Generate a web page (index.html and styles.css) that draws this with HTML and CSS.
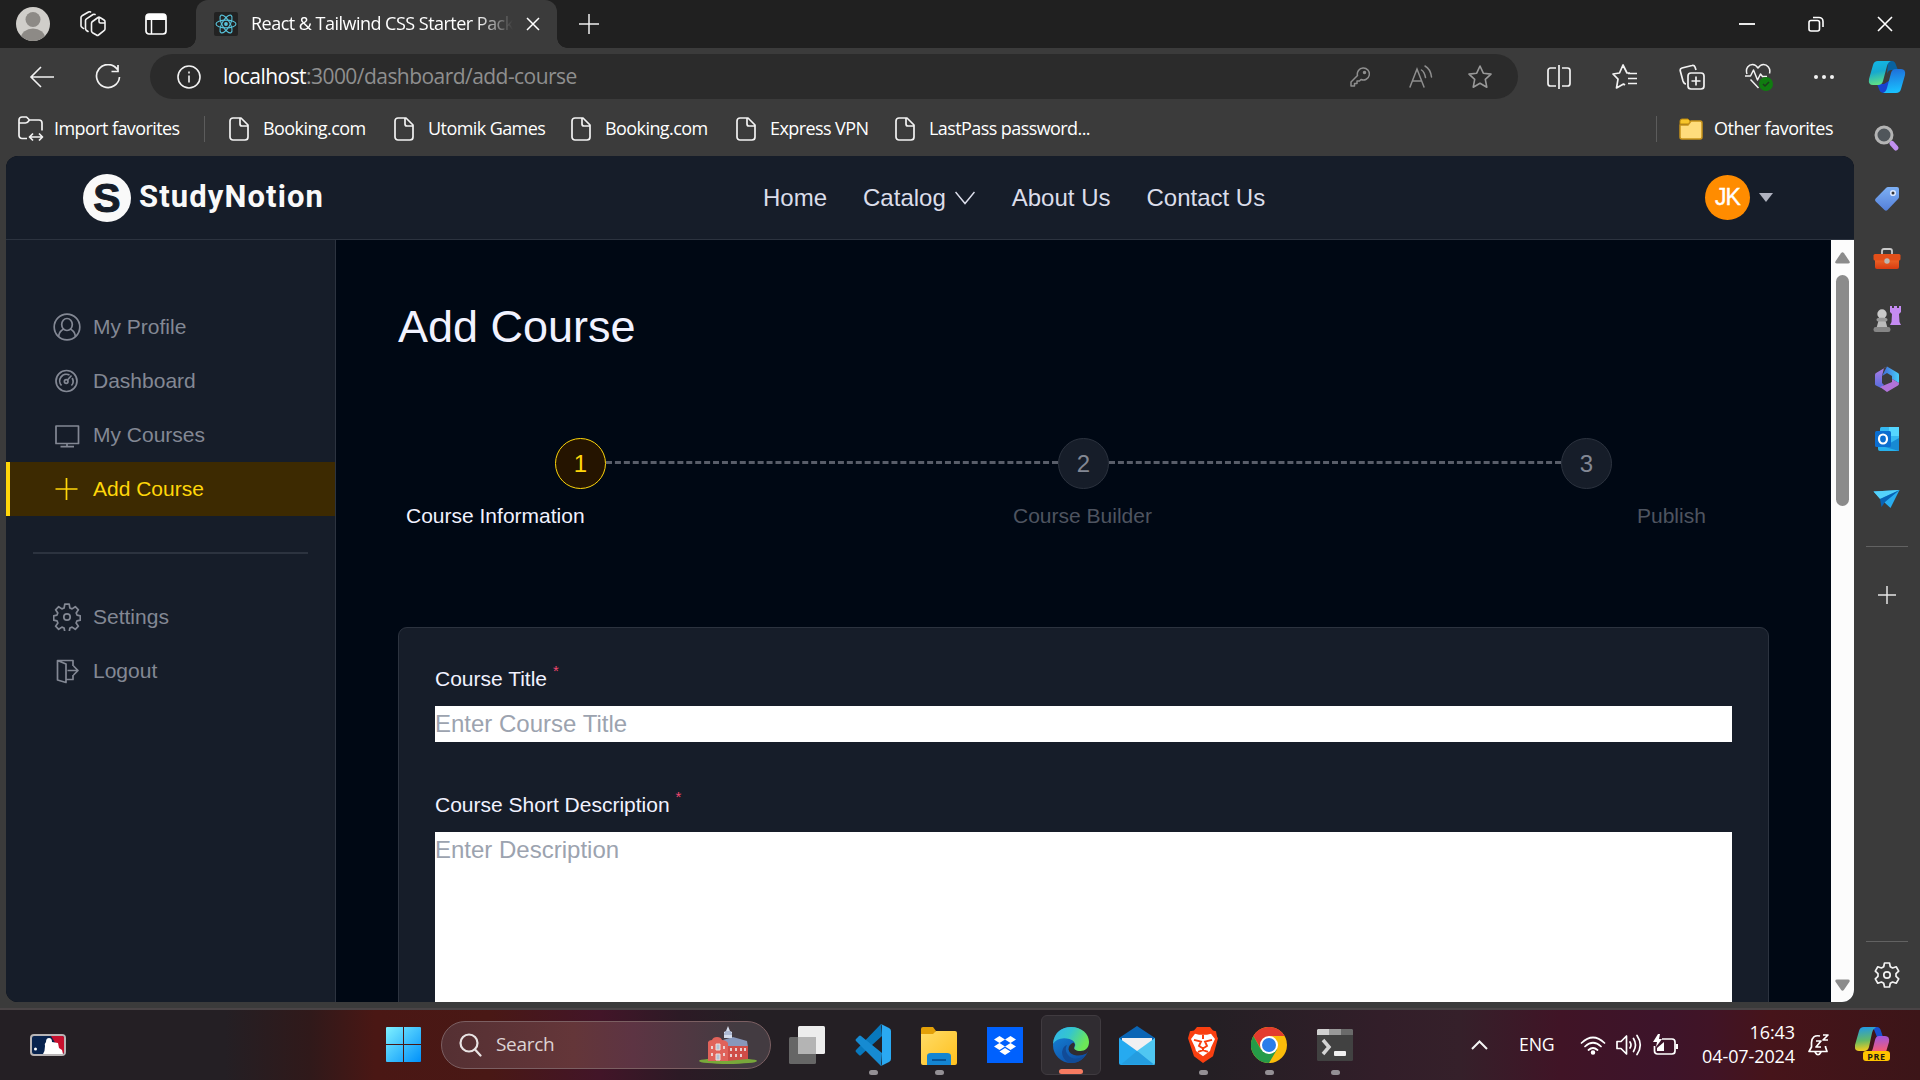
FILE: index.html
```html
<!DOCTYPE html>
<html lang="en">
<head>
<meta charset="utf-8">
<title>React &amp; Tailwind CSS Starter Pack</title>
<link rel="stylesheet" href="styles.css">
</head>
<body>
<div class="window">
  <div class="tabbar">
    <svg class="tb-avatar" width="34" height="34" viewBox="0 0 34 34"><defs><clipPath id="av"><circle cx="17" cy="17" r="17"/></clipPath></defs><g clip-path="url(#av)"><rect width="34" height="34" fill="#d0ceca"/><circle cx="17" cy="12.500" r="7.500" fill="#8d8a86"/><ellipse cx="17" cy="31" rx="12" ry="9.500" fill="#8d8a86"/></g></svg>
    <svg class="tb-work" width="26" height="26" viewBox="0 0 26 26" fill="none" stroke="#f2f2f2" stroke-width="1.600" stroke-linejoin="round" stroke-linecap="round"><path d="M12.500 10.500 18 6.500q1-.7 2 0l4 2.500q1 .7 1 1.800V18q0 1-1 1.700L18.500 24q-1 .7-2 0l-4-2.300q-1-.7-1-1.700v-7.800q0-1 1-1.700zM19 6.500v4q0 1.500 1.500 1.500H24"/><path d="M8 20.500l-1.500-1q-1-.6-1-1.700V9.500q0-1 1-1.700L13 3.500q1-.6 2 0M3.500 17.500 2 16.300q-1-.6-1-1.600V6.500q0-1 1-1.700L8.500 1q1-.6 2 0"/></svg>
    <svg class="tb-tabs" width="22" height="22" viewBox="0 0 22 22"><rect x="1" y="1" width="20" height="20" rx="3" fill="none" stroke="#fff" stroke-width="1.700"/><path d="M1 7V4a3 3 0 0 1 3-3h14a3 3 0 0 1 3 3v3z" fill="#fff"/><path d="M6.500 7v14" stroke="#fff" stroke-width="1.500"/></svg>
    <div class="tab">
      <svg width="24" height="24" viewBox="0 0 24 24"><rect width="24" height="24" rx="2" fill="#222"/><g fill="none" stroke="#58c4dc" stroke-width="1.100"><ellipse cx="12" cy="12" rx="10" ry="3.900"/><ellipse cx="12" cy="12" rx="10" ry="3.900" transform="rotate(60 12 12)"/><ellipse cx="12" cy="12" rx="10" ry="3.900" transform="rotate(120 12 12)"/></g><circle cx="12" cy="12" r="1.900" fill="#58c4dc"/></svg>
      <span class="tab-title">React &amp; Tailwind CSS Starter Pack</span>
      <svg class="tab-close" width="14" height="14" viewBox="0 0 14 14" stroke="#fff" stroke-width="1.500"><path d="M1 1l12 12M13 1 1 13"/></svg>
    </div>
    <svg class="tb-new" width="22" height="22" viewBox="0 0 22 22" stroke="#eee" stroke-width="1.500"><path d="M11 1v20M1 11h20"/></svg>
    <div class="win-controls">
      <svg width="16" height="16" viewBox="0 0 16 16" stroke="#fff" stroke-width="1.800"><path d="M0 8h16"/></svg>
      <svg width="16" height="16" viewBox="0 0 16 16" fill="none" stroke="#fff" stroke-width="1.600"><rect x="1" y="4.500" width="10.500" height="10.500" rx="2"/><path d="M5 1.500h6a4 4 0 0 1 4 4v5.500"/></svg>
      <svg width="16" height="16" viewBox="0 0 16 16" stroke="#fff" stroke-width="1.600"><path d="M1 1l14 14M15 1 1 15"/></svg>
    </div>
  </div>

  <div class="toolbar">
    <svg class="back" width="26" height="22" viewBox="0 0 26 22" fill="none" stroke="#f2f2f2" stroke-width="1.600"><path d="M25 11H2M12 1 2 11l10 10"/></svg>
    <svg class="reload" width="26" height="26" viewBox="0 0 26 26" fill="none" stroke="#f2f2f2" stroke-width="1.700"><path d="M22.500 5.500A11.500 11.500 0 1 0 24.500 13M23 1v6.500h-6.500"/></svg>
    <div class="address">
      <svg width="24" height="24" viewBox="0 0 24 24" fill="none" stroke="#f2f2f2" stroke-width="1.600"><circle cx="12" cy="12" r="11"/><path d="M12 10.500v7M12 6.500v2"/></svg>
      <span class="url"><b>localhost</b>:3000/dashboard/add-course</span>
      <svg class="key" width="20" height="20" viewBox="0 0 20 20" fill="none" stroke="#8f8f8f" stroke-width="1.500" stroke-linejoin="round"><path d="M13 1a6 6 0 1 1-2 11.500L9.500 14H7v2.500H4.500V19H1v-4l6.500-6.500A6 6 0 0 1 13 1z"/><circle cx="14.500" cy="5.500" r="1" fill="#8f8f8f"/></svg>
      <svg class="read" width="24" height="24" viewBox="0 0 24 24" fill="none" stroke="#8f8f8f" stroke-width="1.500" stroke-linecap="round"><path d="M1 22 8 4l7 18M3.500 16h9M12.500 5q3 2 4 7.500M16 1q5.500 3 6.500 11"/></svg>
      <svg class="star" width="26" height="26" viewBox="0 0 26 26" fill="none" stroke="#999" stroke-width="1.600" stroke-linejoin="round"><path d="M13 2l3.300 7.200 7.700.9-5.700 5.300 1.500 7.800L13 19.300l-6.800 3.900 1.500-7.800L2 10.100l7.700-.9z"/></svg>
    </div>
    <div class="tools">
      <svg width="26" height="26" viewBox="0 0 26 26" fill="none" stroke="#f2f2f2" stroke-width="1.700"><path d="M13 1v24M10 4H4.500A2.500 2.500 0 0 0 2 6.500v13A2.500 2.500 0 0 0 4.500 22H10M16 4h5.500A2.500 2.500 0 0 1 24 6.500v13a2.500 2.500 0 0 1-2.500 2.500H16"/></svg>
      <svg width="26" height="26" viewBox="0 0 26 26" fill="none" stroke="#f2f2f2" stroke-width="1.700" stroke-linejoin="round"><path d="M18 9h-3L11 1 7.500 9 1 10l5 5.200L4.500 24l7-4 1.500 1M16 9.500h9M16 14.500h9M16 19.500h9"/></svg>
      <svg width="26" height="26" viewBox="0 0 26 26" fill="none" stroke="#f2f2f2" stroke-width="1.700"><rect x="9" y="9" width="16" height="16" rx="3"/><path d="M17 12.500v9M12.500 17h9M17 6l-1-3a2.500 2.500 0 0 0-3-1.500L3 4a2.500 2.500 0 0 0-1.700 3L4 17q1 3 3 3"/></svg>
      <svg width="28" height="28" viewBox="0 0 28 28" fill="none" stroke="#f2f2f2" stroke-width="1.500" stroke-linejoin="round"><path d="M2 11C0 5 4 1.500 7.500 1.500c3 0 4.500 2 5.500 3.500 1-1.500 2.500-3.500 5.500-3.500C22 1.500 26 5 24.500 10.500M0 13h5.500l3-6 4 10 3-6 2 2.500H22M5.500 16.500l8 8.500"/><circle cx="21" cy="21" r="7" fill="#107c10" stroke="none"/><path d="m18 21 2 2 4-4" stroke="#1d3a1d"/></svg>
      <svg width="22" height="6" viewBox="0 0 22 6" fill="#f2f2f2"><circle cx="3" cy="3" r="2"/><circle cx="11" cy="3" r="2"/><circle cx="19" cy="3" r="2"/></svg>
    </div>
    <svg class="copilot" width="38" height="34" viewBox="0 0 38 34"><defs><linearGradient id="c1" x2=".2" y2="1"><stop stop-color="#11b8e8"/><stop offset=".5" stop-color="#17a9cf"/><stop offset="1" stop-color="#5ddf87"/></linearGradient><linearGradient id="c2" x2=".1" y2="1"><stop stop-color="#1f6bd8"/><stop offset="1" stop-color="#19c0ff"/></linearGradient></defs><path d="M20 1h4q3 0 4 4l2 5h-6q-4 0-5 4z" fill="#08629f"/><path d="M9 24h7l8-5-5 14h-3q-4 0-5-4z" fill="#1642cf"/><path d="M10 1h13q-3 1-4 5l-4 15q-1 4-5 4H5q-5 0-4-6L5 5q1-4 5-4z" fill="url(#c1)"/><path d="M28 33H15q3-1 4-5l4-15q1-4 5-4h5q5 0 4 6l-4 14q-1 4-5 4z" fill="url(#c2)"/></svg>
  </div>

  <div class="favorites">
    <svg class="import-ic" width="26" height="26" viewBox="0 0 26 26" fill="none" stroke="#f2f2f2" stroke-width="1.700" stroke-linejoin="round"><path d="M9 22.500H4a3 3 0 0 1-3-3V4a3 3 0 0 1 3-3h4.500l3 3H21a3 3 0 0 1 3 3v7.500M1 7h6.500q2 0 4-3M12 21h12M15 17.500 11.500 21l3.500 3.500M21 17.500l3.500 3.500-3.500 3.500"/></svg>
    <span class="fav-text f0">Import favorites</span>
    <i class="fav-sep"></i>
    <svg class="doc" viewBox="0 0 20 24"><path d="M1 4a3 3 0 0 1 3-3h8l7 7v12a3 3 0 0 1-3 3H4a3 3 0 0 1-3-3zM11 1v6q0 2 2 2h6"/></svg><span class="fav-text f1">Booking.com</span>
    <svg class="doc" viewBox="0 0 20 24"><path d="M1 4a3 3 0 0 1 3-3h8l7 7v12a3 3 0 0 1-3 3H4a3 3 0 0 1-3-3zM11 1v6q0 2 2 2h6"/></svg><span class="fav-text f2">Utomik Games</span>
    <svg class="doc" viewBox="0 0 20 24"><path d="M1 4a3 3 0 0 1 3-3h8l7 7v12a3 3 0 0 1-3 3H4a3 3 0 0 1-3-3zM11 1v6q0 2 2 2h6"/></svg><span class="fav-text f3">Booking.com</span>
    <svg class="doc" viewBox="0 0 20 24"><path d="M1 4a3 3 0 0 1 3-3h8l7 7v12a3 3 0 0 1-3 3H4a3 3 0 0 1-3-3zM11 1v6q0 2 2 2h6"/></svg><span class="fav-text f4">Express VPN</span>
    <svg class="doc" viewBox="0 0 20 24"><path d="M1 4a3 3 0 0 1 3-3h8l7 7v12a3 3 0 0 1-3 3H4a3 3 0 0 1-3-3zM11 1v6q0 2 2 2h6"/></svg><span class="fav-text f5">LastPass password...</span>
    <div class="fav-other"><i class="fav-sep other"></i>
    <svg width="24" height="22" viewBox="0 0 24 22"><path d="M1 3a2 2 0 0 1 2-2h6l2 2v3H1z" fill="#f7c52b" stroke="#b9860b"/><path d="M1 7h8l3-4h9a2 2 0 0 1 2 2v14a2 2 0 0 1-2 2H3a2 2 0 0 1-2-2z" fill="#ffdc7c" stroke="#c8931a" stroke-width="1.500"/></svg>
    <span class="fav-text fo">Other favorites</span></div>
  </div>

  <div class="main">
    <div class="viewport">
      <header class="nav">
        <div class="logo">
          <div class="logo-mark">S</div>
          <span>StudyNotion</span>
        </div>
        <nav class="links">
          <span>Home</span>
          <span class="catalog">Catalog <svg width="20" height="14" viewBox="0 0 20 14" fill="none" stroke="#dbddea" stroke-width="1.500"><path d="M.5 1 10 12.500 19.500 1"/></svg></span>
          <span>About Us</span>
          <span>Contact Us</span>
        </nav>
        <div class="user"><div class="avatar">JK</div><i class="caret"></i></div>
      </header>
      <div class="body">
        <aside class="side">
          <div class="row"><svg width="28" height="28" viewBox="0 0 28 28"><circle cx="14" cy="14" r="12.800"/><ellipse cx="14" cy="11.500" rx="5.300" ry="6"/><path d="M5.500 23.500q1-6 5.500-7.500M22.500 23.500q-1-6-5.500-7.500"/></svg>My Profile</div>
          <div class="row"><svg width="28" height="28" viewBox="0 0 28 28"><circle cx="13.500" cy="14" r="10.500"/><path d="M8.500 18.500a6.700 6.700 0 0 1 8-10.500M19.200 11q2.300 4.500-.8 7.500"/><circle cx="13.200" cy="14.500" r="1.800"/><path d="M14.500 13l4-4.500"/></svg>Dashboard</div>
          <div class="row"><svg width="28" height="28" viewBox="0 0 28 28"><rect x="3" y="5" width="22.500" height="17.500"/><path d="M14 22.500v3M7.500 25.700h13.500"/></svg>My Courses</div>
          <div class="row active"><svg width="28" height="28" viewBox="0 0 28 28"><path d="M13.500 3v22M2.500 14h22"/></svg>Add Course</div>
          <div class="rule"></div>
          <div class="row"><svg width="28" height="28" viewBox="0 0 28 28"><path d="M11.800 1.200h4.400l.7 3.800 2.200.9 3.200-2.200 3.100 3.100-2.200 3.200.9 2.200 3.200.6v4.300l-3.300.7-.9 2.200 2.300 3.200-3.100 3.100-3.200-2.200-2.200.9-.7 3.800h-4.400l-.7-3.800-2.200-.9-3.200 2.200-3.100-3.100 2.300-3.200-.9-2.200-3.300-.7v-4.300l3.200-.6.900-2.200-2.200-3.200 3.100-3.100 3.200 2.200 2.200-.9z"/><circle cx="14" cy="14" r="3.200"/></svg>Settings</div>
          <div class="row"><svg width="28" height="28" viewBox="0 0 28 28"><path d="M4.500 3.500 13 7v18.500L4.500 23zM4.500 3.500H20V9M13 22.500h7V18M14.500 13.500h10.500M20.500 9l4.500 4.500-4.500 4.500"/></svg>Logout</div>
        </aside>
        <main class="content">
          <h1>Add Course</h1>
          <div class="steps">
            <div class="dot on">1</div><div class="dash"></div><div class="dot">2</div><div class="dash"></div><div class="dot">3</div>
          </div>
          <div class="step-names"><span class="now">Course Information</span><span>Course Builder</span><span class="last">Publish</span></div>
          <form class="card">
            <label>Course Title <sup>*</sup></label>
            <div class="field">Enter Course Title</div>
            <label class="second">Course Short Description <sup>*</sup></label>
            <div class="field area">Enter Description</div>
          </form>
        </main>
        <div class="scroll">
          <svg width="15" height="12" viewBox="0 0 15 12" fill="#8b8b8b"><path d="M6 1.200q1.500-2 3 0l5.500 8q.8 2.300-1.500 2.300H2Q-.3 11.500.5 9.200z"/></svg>
          <div class="thumb"></div>
          <svg class="down" width="15" height="12" viewBox="0 0 15 12" fill="#8b8b8b"><path d="M6 10.800q1.500 2 3 0l5.500-8Q15.300.5 13 .5H2Q-.3.500.5 2.800z"/></svg>
        </div>
      </div>
    </div>
    <div class="rail">
      <svg class="find" viewBox="0 0 28 28"><circle cx="11" cy="11" r="8" fill="#50565b" stroke="#b4b4b4" stroke-width="3"/><path d="m19 19.500 4 4.500" stroke="#c190f0" stroke-width="5" stroke-linecap="round"/></svg>
      <svg viewBox="0 0 28 28"><defs><linearGradient id="tg" y2="1" x2="0"><stop stop-color="#7db0f5"/><stop offset="1" stop-color="#547fd8"/></linearGradient></defs><path d="M15 2h9q2 0 2 2v8q0 1-1 2L14.500 25q-1.500 1.500-3 0L2.700 16.500q-1.500-1.500 0-3L13 3q1-1 2-1z" fill="url(#tg)"/><circle cx="20" cy="8" r="2.300" fill="#333" stroke="#dce8ff" stroke-width="1.600"/></svg>
      <svg viewBox="0 0 28 28"><defs><linearGradient id="bx" y2="1" x2="0"><stop stop-color="#f2712f"/><stop offset="1" stop-color="#d83b10"/></linearGradient></defs><path d="M9 9V6q0-2 2-2h6q2 0 2 2v3" fill="none" stroke="#c9c9c9" stroke-width="1.800"/><path d="M2 12h24v10q0 2-2 2H4q-2 0-2-2z" fill="url(#bx)"/><rect x=".5" y="9" width="27" height="6.500" rx="1.500" fill="#e34f19"/><circle cx="14" cy="16" r="2.700" fill="#bcb7b3"/></svg>
      <svg viewBox="0 0 28 28"><path d="M17 1h2v2h2V1h3v2h2V1h2v6l-2 2 .5 8 1.500 3H17l1.500-3L19 9l-2-2z" fill="#c58bf2"/><circle cx="9" cy="9" r="4.700" fill="#c9c9c9"/><path d="M6.500 12h5l3 11h-11z" fill="#bbb"/><rect x="3.500" y="13" width="11" height="3.500" rx="1.700" fill="#999"/><rect x=".5" y="22" width="17" height="5" rx="2.300" fill="#858585"/></svg>
      <svg viewBox="0 0 28 28"><defs><linearGradient id="m1" x2="1"><stop stop-color="#3f68d8"/><stop offset="1" stop-color="#48cdf8"/></linearGradient><linearGradient id="m2" y2="1" x2="0"><stop stop-color="#b37de6"/><stop offset="1" stop-color="#556ddc"/></linearGradient></defs><path d="M14 1.500 25 8q1 .6 1 2v8l-7-4v-3l-5-3-5 3z" fill="url(#m1)"/><path d="M14 1.500 3 8Q2 8.600 2 10v9q0 1 1 1.500l5 2.500 3-3-2-2V11l2-8z" fill="url(#m2)"/><path d="m7 22 12-5v-3l7 4q0 2-1 2.500L14 27z" fill="#b173d8"/></svg>
      <svg viewBox="0 0 28 28"><rect x="7" y="2" width="19" height="18" rx="1.500" fill="#35b8f1"/><path d="M16 2h10v9H16z" fill="#55d6ff"/><path d="m26 13-14 8v5h14z" fill="#178ad4"/><path d="m5 20 21 6H7q-2 0-2-2z" fill="#27b1ed"/><rect x="2" y="6" width="16" height="16" rx="1.500" fill="#0b6ed0"/><ellipse cx="10" cy="14" rx="4" ry="4.500" fill="none" stroke="#fff" stroke-width="2.200"/></svg>
      <svg viewBox="0 0 28 28"><path d="M.5 6.500 26.500 5l-9 18-6-5.500z" fill="#29adf0"/><path d="M.5 6.500 26.500 5 7 14z" fill="#54d2fb"/><path d="M7 14 26.500 5 12 17l-3.500 5z" fill="#0863b5"/></svg>
      <i class="rail-line"></i>
      <svg class="plus" viewBox="0 0 18 18" stroke="#e5e5e5" stroke-width="1.500"><path d="M9 0v18M0 9h18"/></svg>
      <i class="rail-line low"></i>
      <svg class="gear" viewBox="0 0 26 26" fill="none" stroke="#f2f2f2" stroke-width="1.700" stroke-linejoin="round"><path d="M10.500 1h5l.8 3.700 2.300 1.300 3.600-1.200 2.500 4.300L22 11.700v2.600l2.700 2.600-2.500 4.300-3.600-1.200-2.300 1.300-.8 3.700h-5l-.8-3.700L7.400 20l-3.600 1.200-2.500-4.300L4 14.300v-2.600L1.300 9.100l2.500-4.300L7.400 6l2.300-1.300z"/><circle cx="13" cy="13" r="3.200"/></svg>
    </div>
  </div>
</div>

<div class="taskbar">
  <svg class="mlb" width="36" height="22" viewBox="0 0 36 22"><rect x="1" y="1" width="34" height="20" rx="3" fill="#08234e" stroke="#b8b4b5" stroke-width="2"/><path d="M21 2h11q2 0 2 2v14q0 2-2 2z" fill="#c8102e"/><path d="M13 20q2-3 2-8-1-2 1-4 0-4 3-4 3 0 3 4l6 1 1 5 3 2 1 4z" fill="#fff"/><circle cx="5.500" cy="15" r="1.500" fill="#fff"/></svg>
  <svg class="start" width="35" height="35" viewBox="0 0 35 35"><defs><linearGradient id="w" x2="1" y2="1"><stop stop-color="#7ff1ff"/><stop offset="1" stop-color="#0090fa"/></linearGradient></defs><path d="M1 0h16v17H0V1q0-1 1-1zM18 0h16q1 0 1 1v16H18zM0 18h17v17H1q-1 0-1-1zM18 18h17v16q0 1-1 1H18z" fill="url(#w)"/></svg>
  <div class="search">
    <svg width="23" height="24" viewBox="0 0 23 24" fill="none" stroke="#e9e4e4" stroke-width="2.200" stroke-linecap="round"><circle cx="10" cy="10" r="8.500"/><path d="m16 16.500 5.500 6"/></svg>
    <span>Search</span>
    <svg class="hall" width="60" height="38" viewBox="0 0 60 38"><ellipse cx="30" cy="35" rx="29" ry="3" fill="#78a83a"/><path d="m25 14 10-3 14 4 1 6H28z" fill="#8797bb"/><path d="M29 20h21v13l-21 2z" fill="#cf4d47"/><path d="M10 16q1-2 4-2 1-3 5-3t5 3q4 0 6 3v18H10z" fill="#e0625a"/><path d="M26 12V6l2-1 2-5 2 5 2 1v6z" fill="#d5dcec"/><path d="M26 8h8M27 6h6" stroke="#8797bb"/><path d="M14 20v3m0 4v3M26 20v3m0 4v3m7-8v3m5-3v3m5-3v3m4-3v3M33 28v3m5-3v3m5-3v3" stroke="#ebe4e6" stroke-width="1.700"/><path d="M18 34v-6h4v6zM18 18h4v6h-4z" fill="#b4c3d6" stroke="#f2dcd7"/></svg>
  </div>
  <div class="apps">
    <div class="app"><svg width="36" height="40" viewBox="0 0 36 40"><rect y="12" width="27" height="27" rx="1.500" fill="#666"/><rect x="9" y="1" width="27" height="28" rx="1.500" fill="#ededed"/><path d="M9 12h18v17H9z" fill="#b4b4b4"/></svg></div>
    <div class="app run"><svg width="36" height="42" viewBox="0 0 36 42"><path d="m26 0 1 12L6 31q-1 1-2 0l-3-3q-1-1 0-2z" fill="#0878bd"/><path d="m1 15 3-3q1-1 2 0l21 17-1 13L1 17q-1-1 0-2z" fill="#168bd2"/><path d="m26 0 8 4q2 1 2 3v28q0 2-2 3l-8 4q1-1 1-3V3q0-2-1-3z" fill="#2aa9f2"/></svg></div>
    <div class="app run"><svg width="36" height="40" viewBox="0 0 36 40"><defs><linearGradient id="fo" x2="1" y2="1"><stop stop-color="#ffdc67"/><stop offset="1" stop-color="#ffc01e"/></linearGradient></defs><path d="M0 4q0-2 2-2h10l3 4-3 5H0z" fill="#e3a008"/><path d="M0 9h12l3-3h19q2 0 2 2v30q0 2-2 2H2q-2 0-2-2z" fill="url(#fo)"/><path d="M6 40v-9q0-3 4-3h16q4 0 4 3v9z" fill="#1485d2"/><path d="M11 35h14" stroke="#075598" stroke-width="2"/></svg></div>
    <div class="app"><svg width="36" height="36" viewBox="0 0 36 36"><path d="M0 0h36v36H0z" fill="#0061fe"/><path d="m7 12.500 5.500-3.500 5.500 3.500-5.500 3.500zM18 12.500l5.500-3.500 5.500 3.500-5.500 3.500zM7 19.500l5.500-3.500 5.500 3.500-5.500 3.500zM18 19.500l5.500-3.500 5.500 3.500-5.500 3.500zM12.500 24.500l5.500-3.500 5.500 3.500L18 28z" fill="#fff"/></svg></div>
    <div class="app current"><svg width="36" height="36" viewBox="0 0 36 36"><defs><linearGradient id="e1" x2="1" y2=".4"><stop stop-color="#30b4ef"/><stop offset=".5" stop-color="#35c6cd"/><stop offset="1" stop-color="#6ce757"/></linearGradient><linearGradient id="e2" x2=".7" y2="1"><stop stop-color="#1588dc"/><stop offset="1" stop-color="#0f4da3"/></linearGradient></defs><circle cx="18" cy="18" r="18" fill="url(#e2)"/><path d="M14 18q-3 5 1 10 6 7 17 1-6 8-16 7-7-4-7-11 1-6 5-7z" fill="#114b97"/><path d="M20.500 15.500q-5 2-5 7 1 5 8 6 5 .5 10-2 4-4 3-12l-3 5q-5 4-10 3-3.500-1-2-3.500 1-2-1-3.500z" fill="#302c31"/><path d="M0 17C1 5 9 0 18 0c11 0 18 7 18 15 0 6-4 9-8.500 9-5 0-7-2-6-3.500 2-3 0-7-5-8.500C9 10 3 12 0 17z" fill="url(#e1)"/></svg></div>
    <div class="app"><svg width="36" height="40" viewBox="0 0 36 40"><path d="M0 13 18 1l18 12v14H0z" fill="#0a65b5"/><path d="M3 13h30v14H3z" fill="#f0f0f2"/><path d="m0 13 36 26q0 1-2 1H2q-2 0-2-2z" fill="#26aaf0"/><path d="M36 13 18 26l16 14q2 0 2-2z" fill="#4fc7f2"/><path d="m18 26 17 13.500H2z" fill="#249de0"/></svg></div>
    <div class="app run"><svg width="30" height="36" viewBox="0 0 30 42" preserveAspectRatio="none"><path d="M9 0h13l3 4 3 1 1 6 1 2-5 21-10 8-9-8L0 13l2-8 4-1z" fill="#f93f10"/><path d="m7 8 4 1h8l4-1 4 6-4 10-1 4-7 6-7-6-1-4-4-10z" fill="#fff"/><path d="m6 15 7 2-2 5 4 3 4-3-2-5 7-2M15 25v3m-5 1 5-2 5 2M15 9v5" fill="none" stroke="#f93f10" stroke-width="2"/></svg></div>
    <div class="app run"><svg width="36" height="36" viewBox="0 0 36 36"><circle cx="18" cy="18" r="18" fill="#fbbc0a"/><path d="M2.400 9A18 18 0 0 1 33.600 9H18l-8 13z" fill="#e33b2e"/><path d="M2.400 9A18 18 0 0 0 18 36l8-13.500-16 0z" fill="#259b48"/><circle cx="18" cy="18" r="9" fill="#fff"/><circle cx="18" cy="18" r="7" fill="#2b7de9"/></svg></div>
    <div class="app run"><svg width="36" height="32" viewBox="0 0 36 32"><rect width="36" height="32" rx="1.500" fill="#414141"/><path d="M0 6V1l1-1h11v6z" fill="#cfcfcf"/><path d="M12 0h12v6H12z" fill="#999"/><path d="M24 0h11l1 1v5H24z" fill="#6a6a6a"/><path d="m6 11 6 7-6 7" fill="none" stroke="#d5d5d5" stroke-width="3.500"/><rect x="17" y="22" width="12" height="5" rx="1" fill="#f0f0f0"/></svg></div>
  </div>
  <div class="tray">
    <svg class="up" width="17" height="10" viewBox="0 0 17 10" fill="none" stroke="#f4f4f4" stroke-width="2"><path d="m1 9 7.500-7.500L16 9"/></svg>
    <span class="lang">ENG</span>
    <svg class="wifi" width="26" height="20" viewBox="0 0 26 20" fill="none" stroke="#fff" stroke-width="1.700" stroke-linecap="round"><path d="M1.500 8q11.500-11 23 0M5 11.500q8-7.500 16 0M8.500 15q4.500-4 9 0"/><circle cx="13" cy="17.500" r="1.400" fill="#fff"/></svg>
    <svg class="vol" width="26" height="22" viewBox="0 0 26 22" fill="none" stroke="#fff" stroke-width="1.700" stroke-linejoin="round" stroke-linecap="round"><path d="M1 7.500h4L10.500 2v18L5 14.500H1zM14 8q2 3 0 6M17.500 4.500q4 6.500 0 13M21 1.500q6.500 9.500 0 19"/></svg>
    <svg class="bat" width="25" height="22" viewBox="0 0 25 22" fill="none" stroke="#fff" stroke-width="1.700"><path d="M9 5h10q3 0 3 3v9q0 3-3 3H4.500q-3 0-3-3v-5"/><path d="M24 10v5" stroke-width="2.500"/><path d="M11 8v9H4v-3zM5 0 0 8h4l-1 5 6-8H6l1-5z" fill="#fff" stroke="none"/></svg>
    <div class="clock"><span>16:43</span><span>04-07-2024</span></div>
    <svg class="bell" width="22" height="24" viewBox="0 0 22 24" fill="none" stroke="#fff" stroke-width="1.700" stroke-linejoin="round"><path d="M12 3Q4 1.500 3.500 9.500V14L1 18.500h18L17.500 14v-1M7 19q3 5.500 6 0M8 8h5l-5 6h5M15 2h5l-5 5h5"/></svg>
    <div class="pre"><svg width="36" height="36" viewBox="0 0 36 36"><defs><linearGradient id="p1" x2=".1" y2="1"><stop stop-color="#1d97ee"/><stop offset=".6" stop-color="#64b965"/><stop offset="1" stop-color="#efcb20"/></linearGradient><linearGradient id="p2" x2=".1" y2="1"><stop stop-color="#9b55e5"/><stop offset="1" stop-color="#f65d73"/></linearGradient></defs><path d="M18 0h4q3 0 4 4l2 6h-6z" fill="#164fd0"/><path d="M9 0h12q-3 2-4 6l-3 14q-1 4-5 4H4q-5 0-4-6L4 4q1-4 5-4z" fill="url(#p1)"/><path d="M24 9h6q5 0 4 6l-3 10H15q2 0 3-4l2-8q1-4 4-4z" fill="url(#p2)"/></svg><b>PRE</b></div>
  </div>
</div>
</body>
</html>
```
FILE: styles.css
```css
* { box-sizing: border-box; }
body {
  margin: 0; width: 1920px; height: 1080px; overflow: hidden;
  display: flex; flex-direction: column;
  background: #241f24; font-family: "Liberation Sans", Arial, sans-serif;
}
svg { display: block; flex: none; }
.window { height: 1010px; background: #3b3b3b; border-bottom: 2px solid #4a4446; display: flex; flex-direction: column; }

/* Tab strip */
.tabbar { height: 48px; flex: none; background: #202020; display: flex; align-items: center; font-family: "Open Sans", sans-serif; color: #fff; }
.tb-avatar { margin-left: 16px; }
.tb-work { margin-left: 30px; }
.tb-tabs { margin-left: 39px; }
.tab { width: 361px; height: 48px; margin-left: 29px; padding: 0 17px 0 18px; background: #3b3b3b; border-radius: 12px 12px 0 0; display: flex; align-items: center; position: relative; }
.tab::before, .tab::after { content: ""; position: absolute; bottom: 0; width: 10px; height: 10px; }
.tab::before { left: -10px; background: radial-gradient(circle at 0 0, transparent 9.500px, #3b3b3b 10px); }
.tab::after { right: -10px; background: radial-gradient(circle at 100% 0, transparent 9.500px, #3b3b3b 10px); }
.tab-title { width: 262px; margin: -2px 0 0 13px; font-size: 18px; letter-spacing: -.52px; white-space: nowrap; overflow: hidden; -webkit-mask-image: linear-gradient(90deg, #000 86%, transparent); mask-image: linear-gradient(90deg, #000 86%, transparent); }
.tab-close { margin-left: 13px; }
.tb-new { margin-left: 21px; }
.win-controls { margin-left: auto; margin-right: 27px; display: flex; gap: 53px; }

/* Address row */
.toolbar { height: 57px; flex: none; display: flex; align-items: center; }
.back { margin-left: 29px; }
.reload { margin-left: 40px; }
.address { width: 1368px; height: 45px; margin-left: 29px; padding: 0 25px 0 27px; border-radius: 23px; background: #2b2b2b; display: flex; align-items: center; }
.url { margin: -2px 0 0 22px; font: 21px "Open Sans", sans-serif; letter-spacing: -.55px; color: #8f8f8f; }
.url b { font-weight: 400; color: #fff; }
.key { margin-left: auto; }
.read { margin-left: 39px; }
.star { margin-left: 34px; }
.tools { display: flex; align-items: center; margin-left: 28px; width: 289px; justify-content: space-between; }
.copilot { margin-left: 33px; }

/* Favorites row */
.favorites { height: 51px; flex: none; padding: 0 0 4px 18px; display: flex; align-items: center; width: 1854px; }
.fav-text { margin-top: -2px; font: 18px "Open Sans", sans-serif; letter-spacing: -.58px; color: #fff; white-space: nowrap; }
.fav-text.f0 { width: 150px; margin-left: 10px; }
.fav-sep { width: 1px; height: 26px; background: #5c5c5c; }
.doc { width: 20px; height: 24px; fill: none; stroke: #f2f2f2; stroke-width: 1.7; stroke-linejoin: round; margin-left: 24px; }
.f1, .f2, .f3, .f4, .f5 { margin-left: 14px; }
.f1 { width: 107px; } .f2 { width: 119px; } .f3 { width: 107px; } .f4 { width: 101px; }
.fav-other { margin-left: auto; display: flex; align-items: center; }
.fav-other svg { margin: 0 11px 0 22px; }
.fo { width: 140px; letter-spacing: -.5px; }

.main { height: 846px; display: flex; }
.viewport { width: 1848px; margin-left: 6px; border-radius: 12px; overflow: hidden; background: #000814; }

/* Site header */
.nav { height: 84px; background: #161d29; border-bottom: 1px solid #2c333f; display: flex; align-items: center; }
.logo { margin-left: 77px; width: 680px; display: flex; align-items: center; gap: 8px; color: #f9f9f9; font: 700 31px Roboto, sans-serif; }
.logo span { margin-top: -3px; letter-spacing: 1.100px; }
.logo-mark { width: 48px; height: 48px; border-radius: 50%; background: #f9f9f9; color: #161d29; font: 700 41px/49px "Liberation Sans", sans-serif; text-align: center; -webkit-text-stroke: 1px #161d29; }
.links { display: flex; gap: 36px; font-size: 24px; color: #dbddea; }
.catalog { display: flex; align-items: center; gap: 9px; margin-right: 1px; }
.user { margin-left: auto; margin-right: 81px; display: flex; align-items: center; gap: 9px; }
.avatar { width: 45px; height: 45px; border-radius: 50%; background: #ff8c00; color: #fff; font-size: 23px; line-height: 45px; text-align: center; letter-spacing: -1px; -webkit-text-stroke: .4px #fff; }
.caret { border: 7.500px solid transparent; border-top: 9px solid #afb2bf; border-bottom: 0; }

.body { height: 762px; display: flex; }
.side { width: 330px; flex: none; background: #161d29; border-right: 1px solid #2c333f; padding-top: 60px; }
.row { height: 54px; padding-left: 47px; display: flex; align-items: center; gap: 12px; font-size: 21px; color: #838894; }
.row svg { fill: none; stroke: currentColor; stroke-width: 1.700; stroke-linejoin: round; }
.row.active { background: #3d2a01; border-left: 4px solid #ffd60a; padding-left: 43px; color: #ffd60a; }
.rule { height: 2px; width: 275px; margin: 36px 0 36px 27px; background: #2c333f; }

/* Page content */
.content { width: 1495px; padding: 60px 62px 0; overflow: hidden; }
h1 { margin: 0; font: 400 45px/54px "Liberation Sans", Arial, sans-serif; color: #f1f2ff; }
.steps { margin: 84px 0 0 157px; display: flex; }
.dot { width: 51px; height: 51px; border-radius: 50%; border: 1px solid #2c333f; background: #161d29; color: #838894; font-size: 24px; line-height: 50px; text-align: center; }
.dot.on { border: 1.500px solid #ffd60a; background: #251400; color: #ffd60a; }
.dash { width: 452px; height: 26px; border-bottom: 3px dashed #585d69; }
.step-names { margin: 11px 0 0 8px; display: flex; font-size: 21px; line-height: 32px; color: #4e5460; }
.step-names span { width: 607px; }
.step-names span.last { width: auto; margin-left: 17px; }
.step-names .now { color: #f1f2ff; }
.card { margin: 95px 0 0; width: 1371px; height: 900px; padding: 36px; border: 1px solid #2c333f; border-radius: 9px; background: #161d29; }
label { display: block; height: 30px; line-height: 30px; font-size: 21px; color: #f1f2ff; }
label sup { font-size: 15px; line-height: 0; color: #ef476f; vertical-align: 10px; }
.field { margin-top: 12px; height: 36px; background: #fff; color: #9ca3af; font-size: 24px; line-height: 36px; }
.second { margin-top: 48px; }
.area { height: 210px; }

.scroll { width: 23px; background: #fcfcfc; display: flex; flex-direction: column; align-items: center; padding: 12px 0 11px; }
.thumb { width: 13px; height: 231px; margin-top: 11px; border-radius: 7px; background: #8b8b8b; }
.down { margin-top: auto; }

/* Browser side rail */
.rail { width: 66px; margin-top: -33px; display: flex; flex-direction: column; align-items: center; }
.rail svg { width: 28px; height: 28px; margin: 1px 0 31px; }
.rail svg.find { margin-bottom: 32px; }
.rail-line { width: 42px; height: 1px; background: #626262; margin: 2px 0 0; }
.rail svg.plus { width: 18px; height: 18px; margin: 39px 0 0; }
.rail-line.low { margin-top: auto; }
.rail svg.gear { width: 26px; height: 26px; margin: 20px 0 14px; }

/* Taskbar */
.taskbar { height: 70px; padding-bottom: 1px; display: flex; align-items: center; color: #fff; font-family: "Open Sans", sans-serif;
  background: linear-gradient(90deg, #241f24 0, #241f24 225px, #30191a 310px, #4a1714 375px, #491815 490px, #421528 600px, #2c1a25 680px, #241f24 750px, #241f24 1210px, #321e29 1380px, #35202a 1460px, #401426 1560px, #3d142a 1660px, #401426 1710px, #46141a 1770px, #3c1518 1920px); }
.mlb { margin-left: 30px; }
.start { margin-left: 320px; }
.search { width: 330px; height: 48px; margin-left: 20px; padding: 0 12px 0 17px; border-radius: 24px; border: 1px solid #7b5f62; display: flex; align-items: center; background: linear-gradient(90deg, #553033, #643639 40%, #5d3443 58%, #433b41 90%); }
.search span { margin: -2px 0 0 14px; font-size: 19px; letter-spacing: -.3px; color: #ddd3d4; }
.search svg.hall { margin-left: auto; }
.apps { margin-left: 6px; display: flex; gap: 6px; }
.app { width: 60px; height: 60px; border-radius: 6px; display: flex; align-items: center; justify-content: center; position: relative; }
.current { background: #302c31; border: 1px solid #403b40; }
.run::after, .current::after { content: ""; position: absolute; bottom: 0; left: 26px; width: 9px; height: 5px; border-radius: 3px; background: #949095; }
.current::after { left: 17px; width: 24px; background: #f67b61; }
.tray { margin-left: auto; display: flex; align-items: center; }
.lang { margin: -1px 24px 0 31px; width: 37px; font-size: 17.700px; letter-spacing: -.2px; }
.vol { margin-left: 10px; }
.bat { margin-left: 11px; }
.clock { width: 117px; margin-top: -1px; display: flex; flex-direction: column; align-items: flex-end; font-size: 18px; line-height: 24px; letter-spacing: -.1px; }
.bell { margin-left: 13px; }
.pre { margin: 0 29px 0 25px; position: relative; }
.pre b { position: absolute; left: 8px; top: 24px; width: 27px; height: 10px; border-radius: 3px; background: #ffc400; color: #241b12; font: 700 9px/11px "Open Sans", sans-serif; text-align: center; letter-spacing: .6px; }
```
